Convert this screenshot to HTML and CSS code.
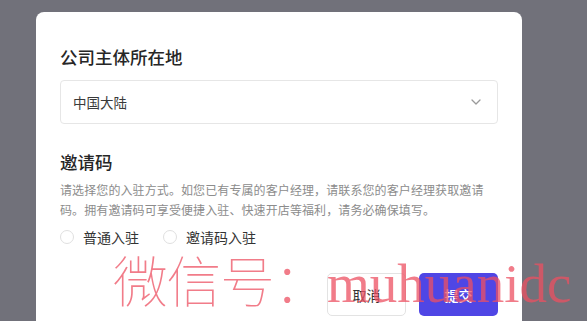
FILE: index.html
```html
<!DOCTYPE html>
<html lang="zh">
<head>
<meta charset="utf-8">
<link rel="stylesheet" href="styles.css">
</head>
<body>
<div class="modal">
  <h2 class="title">公司主体所在地</h2>
  <div class="select">
    <span class="select-text">中国大陆</span>
    <svg class="chev" width="10" height="6" viewBox="0 0 10 6"><polyline points="1,1 5,5 9,1" fill="none" stroke="#9a9a9a" stroke-width="1.3" stroke-linecap="round" stroke-linejoin="round"/></svg>
  </div>
  <h2 class="title title-2">邀请码</h2>
  <p class="desc">请选择您的入驻方式。如您已有专属的客户经理，请联系您的客户经理获取邀请码。拥有邀请码可享受便捷入驻、快速开店等福利，请务必确保填写。</p>
  <div class="radios">
    <label class="radio"><span class="circle"></span><span class="radio-label">普通入驻</span></label>
    <label class="radio"><span class="circle"></span><span class="radio-label">邀请码入驻</span></label>
  </div>
  <div class="actions">
    <button class="btn btn-cancel">取消</button>
    <button class="btn btn-submit">提交</button>
  </div>
</div>
<div class="watermark"><span class="wm-cjk">微信号：</span><span class="wm-latin">muhuanidc</span></div>
</body>
</html>
```
FILE: styles.css
```css
html, body {
  margin: 0;
  padding: 0;
}
body {
  width: 587px;
  height: 321px;
  overflow: hidden;
  background: #71717a;
  font-family: "Noto Sans CJK SC", "Noto Sans", sans-serif;
  position: relative;
}
.modal {
  margin: 12px 0 0 36px;
  width: 486px;
  box-sizing: border-box;
  padding: 33px 24px 30px;
  background: #ffffff;
  border-radius: 8px;
}
.title {
  margin: 0;
  font-size: 17.5px;
  line-height: 24px;
  font-weight: 500;
  color: #262626;
}
.title-2 {
  margin-top: 26px;
}
.select {
  margin-top: 11px;
  height: 44px;
  box-sizing: border-box;
  border: 1px solid #e6e6e6;
  border-radius: 4px;
  display: flex;
  align-items: center;
  justify-content: space-between;
  padding: 0 16px 0 12px;
}
.select-text {
  font-size: 13.5px;
  color: #3a3a3a;
}
.chev {
  display: block;
}
.desc {
  margin: 6px 0 0;
  max-width: 432px;
  font-size: 12px;
  letter-spacing: 0.1px;
  line-height: 20px;
  color: #8c8c8c;
}
.radios {
  margin-top: 7px;
  display: flex;
  gap: 24px;
  height: 20px;
  align-items: center;
}
.radio {
  display: flex;
  align-items: center;
  gap: 9px;
}
.circle {
  width: 14px;
  height: 14px;
  box-sizing: border-box;
  border: 1px solid #e0e0e0;
  border-radius: 50%;
  background: #fff;
}
.radio-label {
  font-size: 14px;
  color: #333333;
}
.actions {
  margin-top: 26px;
  display: flex;
  justify-content: flex-end;
  gap: 13px;
}
.btn {
  width: 79px;
  height: 43px;
  border-radius: 5px;
  font-family: "Noto Sans CJK SC", "Noto Sans", sans-serif;
  font-size: 14px;
  cursor: pointer;
}
.btn-cancel {
  background: #ffffff;
  border: 1px solid #e3e3e3;
  color: #333333;
}
.btn-submit {
  background: #4f46e5;
  border: none;
  color: #ffffff;
  font-weight: 500;
}
.watermark {
  position: absolute;
  left: 113px;
  top: 248px;
  height: 60px;
  line-height: 60px;
  font-size: 55px;
  color: rgba(236, 80, 98, 0.75);
  white-space: nowrap;
  pointer-events: none;
}
.wm-cjk {
  font-family: "Noto Sans CJK SC", sans-serif;
  font-weight: 100;
  letter-spacing: -1.5px;
}
.wm-latin {
  font-family: "Liberation Serif", serif;
  font-weight: 400;
}
```
